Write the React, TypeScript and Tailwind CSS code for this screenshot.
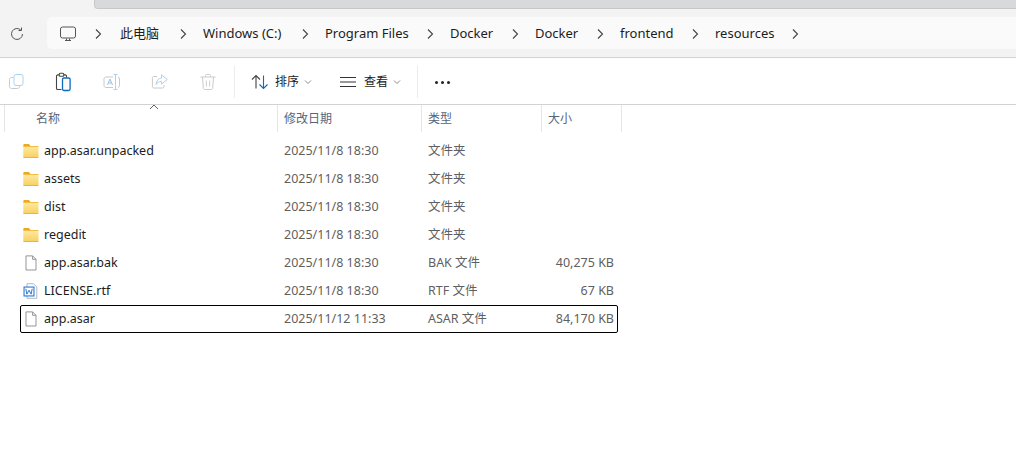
import React from 'react';

const font = "font-['Noto_Sans','Noto_Sans_CJK_SC',sans-serif]";

const Crumb = ({ label, className }: { label: string; className: string }) => (
  <>
    <span className={`text-[13px] text-[#1c1c1c] whitespace-nowrap ${className}`}>{label}</span>
    <div className="w-[41px] flex justify-center shrink-0">
      <Chevron />
    </div>
  </>
);

function Chevron() {
  return (
    <svg width="16" height="16" viewBox="0 0 16 16" fill="none" stroke="#444" strokeWidth={1.1} className="shrink-0">
      <path d="M6 3.5l4.5 4.5L6 12.5" />
    </svg>
  );
}

const FolderIcon = () => (
  <svg width="16" height="16" viewBox="0 0 16 16" className="shrink-0">
    <defs>
      <linearGradient id="folderFill" x1="0" y1="0" x2="0" y2="1">
        <stop offset="0" stopColor="#fdeaa8" />
        <stop offset="1" stopColor="#f8cf5c" />
      </linearGradient>
    </defs>
    <path d="M0.300 2.300c0-.7.5-1.200 1.200-1.200h3.800c.4 0 .7.100 1 .4L7.800 3.200h-7.500z" fill="#eaa824" />
    <rect x="0.300" y="3" width="15.200" height="12" rx="1" fill="url(#folderFill)" />
    <rect x="0.300" y="3" width="15.200" height="0.900" fill="#f3b93a" />
    <rect x="0.300" y="14.100" width="15.200" height="0.900" rx="0.400" fill="#edb33a" />
  </svg>
);

const FileIcon = () => (
  <svg width="16" height="16" viewBox="0 0 16 16" fill="#fff" stroke="#8a8a8a" strokeWidth={0.9} className="shrink-0">
    <path d="M3 .9h6.600L13 4.300V15H3z" />
    <path d="M9.600.9v3.400H13" fill="none" />
  </svg>
);

const WordIcon = () => (
  <svg width="16" height="16" viewBox="0 0 16 16" className="shrink-0">
    <path d="M4 .7h6.500l3.300 3.300v11.300H4z" fill="#fff" stroke="#9aa6b8" strokeWidth={0.8} />
    <rect x="0.500" y="3.500" width="11" height="10" fill="#2b78d8" />
    <rect x="1.600" y="4.600" width="8.800" height="7.800" fill="#fff" />
    <path d="M2.800 5.800l1.100 5.400 2.100-4 2.100 4 1.100-5.400" fill="none" stroke="#2b78d8" strokeWidth={1} />
  </svg>
);

const IconCopy = () => (
  <svg width="18" height="18" viewBox="0 0 18 18" fill="none" strokeWidth={1}>
    <path d="M5.500 4.500H3.500c-1.100 0-2 .9-2 2v7c0 1.100.9 2 2 2h6c1.100 0 2-.9 2-2v-1" stroke="#c9c9c9" />
    <rect x="6" y="1.500" width="9" height="11" rx="2" fill="#fff" stroke="#a9d3f3" />
  </svg>
);

const IconPaste = () => (
  <svg width="18" height="20" viewBox="0 0 18 20" fill="none" strokeWidth={1.1}>
    <path d="M6.500 17.500H2.800c-.7 0-1.300-.6-1.300-1.300V4.200c0-.7.600-1.300 1.300-1.300h7.400c.7 0 1.300.6 1.300 1.300v1.600" stroke="#444" />
    <rect x="4.200" y="1.200" width="4.600" height="3" rx="1" fill="#fff" stroke="#444" />
    <rect x="7.500" y="6" width="7.600" height="12.500" rx="1.400" fill="#fafafa" stroke="#0f6cbd" strokeWidth={1.3} />
  </svg>
);

const IconRename = () => (
  <svg width="18" height="18" viewBox="0 0 18 18" fill="none">
    <path d="M10 4H3c-1.100 0-2 .9-2 2v6.500c0 1.100.9 2 2 2h7M15 4c1 .2 1.500.9 1.500 2v6.500c0 1.100-.5 1.800-1.500 2" stroke="#c9c9c9" />
    <path d="M4.500 12l2.500-6 2.500 6M5.400 10h3.200" stroke="#9ac2e6" />
    <path d="M10.500 1.500h4M10.500 16.500h4M12.500 1.500v15" stroke="#a9d3f3" />
  </svg>
);

const IconShare = () => (
  <svg width="18" height="18" viewBox="0 0 18 18" fill="none">
    <path d="M6 3.500H3c-1 0-1.600.6-1.600 1.600v8.300c0 1 .6 1.600 1.600 1.600h8.500c1 0 1.600-.6 1.600-1.600V12" stroke="#c9c9c9" />
    <path d="M10.500 1.800l5.800 4.700-5.800 4.700V8.500C8 8.400 6.300 9.400 5 11.500c.4-3.800 2.500-6.100 5.500-6.500z" fill="#fff" stroke="#a9d3f3" />
  </svg>
);

const IconDelete = () => (
  <svg width="18" height="18" viewBox="0 0 18 18" fill="none" stroke="#cccccc">
    <path d="M1.500 4h15M6.500 4V2.700c0-.7.500-1.200 1.200-1.200h2.600c.7 0 1.200.5 1.200 1.200V4M3.500 4l.8 11c.1.800.7 1.500 1.500 1.500h6.400c.8 0 1.400-.7 1.500-1.500l.8-11M7.300 7.500v6M10.700 7.500v6" />
  </svg>
);

const IconSort = () => (
  <svg width="18" height="16" viewBox="0 0 18 16" fill="none" strokeWidth={1.1}>
    <path d="M5 14.500V1.500M1 5.500l4-4 4 4" stroke="#444" />
    <path d="M12.500 1.500v13M8.500 10.500l4 4 4-4" stroke="#0f6cbd" />
  </svg>
);

const IconView = () => (
  <svg width="16" height="12" viewBox="0 0 16 12" stroke="#333" strokeWidth={1}>
    <path d="M0 1.500h16M0 6h16M0 10.500h16" />
  </svg>
);

const SmallDown = () => (
  <svg width="8" height="6" viewBox="0 0 8 6" fill="none" stroke="#8a8a8a" strokeWidth={1}>
    <path d="M1 1.500l3 3 3-3" />
  </svg>
);

const ToolButton = ({ children, className }: { children: React.ReactNode; className: string }) => (
  <div className={`flex items-center justify-center ${className}`}>{children}</div>
);

const rows = [
  { name: 'app.asar.unpacked', date: '2025/11/8 18:30', type: '文件夹', size: '', icon: <FolderIcon /> },
  { name: 'assets', date: '2025/11/8 18:30', type: '文件夹', size: '', icon: <FolderIcon /> },
  { name: 'dist', date: '2025/11/8 18:30', type: '文件夹', size: '', icon: <FolderIcon /> },
  { name: 'regedit', date: '2025/11/8 18:30', type: '文件夹', size: '', icon: <FolderIcon /> },
  { name: 'app.asar.bak', date: '2025/11/8 18:30', type: 'BAK 文件', size: '40,275 KB', icon: <FileIcon /> },
  { name: 'LICENSE.rtf', date: '2025/11/8 18:30', type: 'RTF 文件', size: '67 KB', icon: <WordIcon /> },
  { name: 'app.asar', date: '2025/11/12 11:33', type: 'ASAR 文件', size: '84,170 KB', icon: <FileIcon />, selected: true },
];

export default function App() {
  return (
    <div className={`w-[1016px] h-[455px] overflow-hidden bg-white ${font}`}>
      {/* address bar */}
      <div className="h-[58px] bg-[#f3f3f3] border-b border-[#d2d2d2]">
        <div className="ml-[94px] h-[9px] bg-[#d8d9db] border-b border-l border-[#c8c8c8] rounded-bl-[4px]" />
        <div className="flex items-center mt-2">
          <div className="w-[34px] mr-[13px] flex justify-center pt-px">
            <svg width="16" height="16" viewBox="0 0 16 16" fill="none" stroke="#555" strokeWidth={1}>
              <path d="M13.500 8a5.500 5.500 0 1 1-1.700-4M12.500 1.500v3h-3" />
            </svg>
          </div>
          <div className="flex-1 h-8 bg-[#fafafa] rounded-l-[5px] flex items-center pl-[13px] pt-px">
            <svg width="16" height="16" viewBox="0 0 16 16" fill="none" stroke="#555" strokeWidth={1} className="shrink-0">
              <rect x="0.500" y="1" width="15" height="11" rx="2" />
              <path d="M5 14.500h6M6.500 12.500v2M9.500 12.500v2" />
            </svg>
            <div className="w-[14px]" />
            <Chevron />
            <div className="w-[14px]" />
            <Crumb label="此电脑" className="w-[42px]" />
            <Crumb label="Windows (C:)" className="w-[81px]" />
            <Crumb label="Program Files" className="w-[84px]" />
            <Crumb label="Docker" className="w-[44px]" />
            <Crumb label="Docker" className="w-[44px]" />
            <Crumb label="frontend" className="w-[54px]" />
            <Crumb label="resources" className="w-[59px]" />
          </div>
        </div>
      </div>

      {/* toolbar */}
      <div className="h-[47px] border-b border-[#d2d2d2] flex items-center pt-[2px]">
        <ToolButton className="w-[33px]"><IconCopy /></ToolButton>
        <ToolButton className="w-[48px] ml-[7px]"><IconPaste /></ToolButton>
        <ToolButton className="w-[48px]"><IconRename /></ToolButton>
        <ToolButton className="w-[48px]"><IconShare /></ToolButton>
        <ToolButton className="w-[48px]"><IconDelete /></ToolButton>
        <div className="w-px h-8 bg-[#ececec] ml-[2px]" />
        <div className="flex items-center ml-[16px] w-[74px]">
          <IconSort />
          <span className="text-[12px] text-[#1c1c1c] ml-[6px]">排序</span>
          <span className="ml-[5px] flex"><SmallDown /></span>
        </div>
        <div className="flex items-center ml-[15px] w-[70px]">
          <IconView />
          <span className="text-[12px] text-[#1c1c1c] ml-[8px]">查看</span>
          <span className="ml-[5px] flex"><SmallDown /></span>
        </div>
        <div className="w-px h-8 bg-[#ececec] ml-[7px]" />
        <div className="flex gap-[3px] ml-[17px]">
          <span className="w-[3px] h-[3px] rounded-full bg-[#222]" />
          <span className="w-[3px] h-[3px] rounded-full bg-[#222]" />
          <span className="w-[3px] h-[3px] rounded-full bg-[#222]" />
        </div>
      </div>

      {/* column header */}
      <div className="relative flex h-[27px] text-[12px] text-[#56657a]">
        <svg width="10" height="6" viewBox="0 0 10 6" fill="none" stroke="#666" className="absolute left-[149px] top-[-1px]">
          <path d="M1 5l4-4 4 4" />
        </svg>
        <div className="w-[5px] border-r border-[#e5e5e5]" />
        <div className="w-[273px] pl-[31px] border-r border-[#e5e5e5] leading-[27px]">名称</div>
        <div className="w-[144px] pl-[6px] border-r border-[#e5e5e5] leading-[27px]">修改日期</div>
        <div className="w-[120px] pl-[6px] border-r border-[#e5e5e5] leading-[27px]">类型</div>
        <div className="w-[80px] pl-[6px] border-r border-[#e5e5e5] leading-[27px]">大小</div>
      </div>

      {/* rows */}
      <div className="pt-[5px] pl-[20px] w-[618px]">
        {rows.map((r) => (
          <div
            key={r.name}
            className={`flex items-center h-[28px] text-[12.5px] border rounded-[2px] ${r.selected ? 'border-black' : 'border-transparent'}`}
          >
            <div className="w-[257px] flex items-center pl-[2px] gap-[5px] text-[#1c1c1c]">
              {r.icon}
              <span className="whitespace-nowrap">{r.name}</span>
            </div>
            <div className="w-[144px] pl-[6px] text-[#5f5f5f] whitespace-nowrap">{r.date}</div>
            <div className="w-[100px] pl-[6px] text-[#5f5f5f] whitespace-nowrap">{r.type}</div>
            <div className="flex-1 pr-[3px] text-right text-[#5f5f5f] whitespace-nowrap">{r.size}</div>
          </div>
        ))}
      </div>
    </div>
  );
}
